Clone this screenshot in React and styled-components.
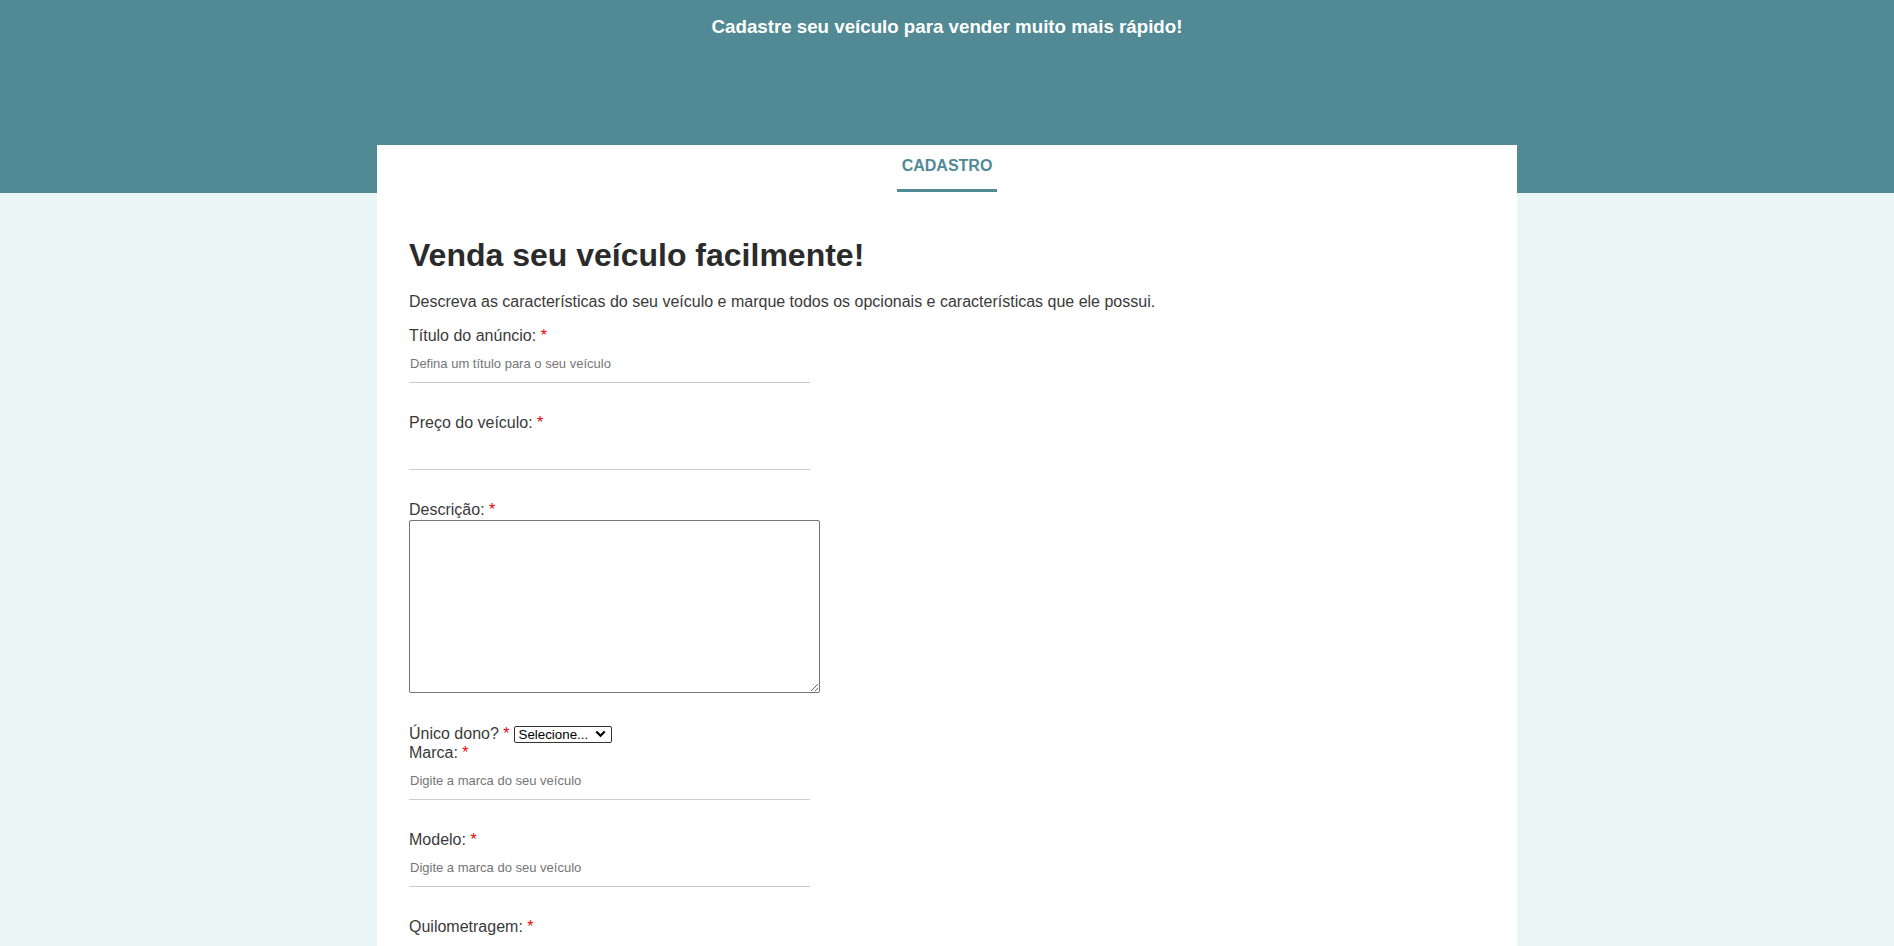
import React from 'react'
import styled, { createGlobalStyle } from 'styled-components'

const fields = [
  { name: 'titulo', label: 'Título do anúncio:', placeholder: 'Defina um título para o seu veículo' },
  { name: 'preco', label: 'Preço do veículo:', placeholder: '' }
]

const lowerFields = [
  { name: 'marca', label: 'Marca:', placeholder: 'Digite a marca do seu veículo' },
  { name: 'modelo', label: 'Modelo:', placeholder: 'Digite a marca do seu veículo' },
  { name: 'km', label: 'Quilometragem:', placeholder: '' },
  { name: 'ano', label: 'Ano:', placeholder: '' }
]

const GlobalStyle = createGlobalStyle`
  html, body {
    margin: 0;
    padding: 0;
  }
  body {
    background: #eaf6f6;
    font-family: "Liberation Sans", Arial, sans-serif;
    color: #333;
  }
`

const Header = styled.header`
  background: #518a94;
  height: 193px;
  padding-top: 16px;
  box-sizing: border-box;
  text-align: center;
`

const HeaderTitle = styled.h3`
  margin: 0;
  color: #fff;
  font-size: 18.72px;
  font-weight: 700;
  line-height: 22px;
`

const Card = styled.main`
  width: 1140px;
  margin: -48px auto 0;
  background: #fff;
  min-height: 900px;
`

const TabBar = styled.nav`
  display: flex;
  justify-content: center;
`

const Tab = styled.div`
  padding: 12px 5px 14px;
  font-size: 16px;
  line-height: 18px;
  font-weight: 700;
  color: #518a94;
  border-bottom: ${props => (props.active ? '3px solid #518a94' : '3px solid transparent')};
`

const Content = styled.section`
  padding: 24px 32px 40px;
`

const Title = styled.h1`
  margin: 21px 0 19px;
  font-size: 32px;
  line-height: 37px;
  color: #2b2b2b;
`

const Intro = styled.p`
  margin: 0 0 16px;
  font-size: 16px;
  line-height: 18px;
  color: #3a3a3a;
`

const Label = styled.label`
  display: block;
  font-size: 16px;
  line-height: 18px;
  color: #3a3a3a;
  margin-bottom: ${props => (props.inline ? '1px' : '0')};
`

const Required = styled.span`
  color: #e00;
`

const TextInput = styled.input`
  display: block;
  width: 401px;
  height: 38px;
  box-sizing: border-box;
  margin: 0 0 31px;
  padding: 0 1px;
  border: none;
  border-bottom: 1px solid #ccc;
  font-family: "Liberation Sans", Arial, sans-serif;
  font-size: 13px;
  color: #333;
  outline: none;
  ::placeholder {
    color: #777;
  }
`

const TextArea = styled.textarea`
  display: block;
  width: 411px;
  height: 173px;
  box-sizing: border-box;
  margin: 1px 0 32px;
  border: 1px solid #767676;
  border-radius: 2px;
  font-family: "Liberation Sans", Arial, sans-serif;
`

const SelectWrap = styled.span`
  position: relative;
  display: inline-block;
  margin-left: 4px;
  vertical-align: top;
  height: 18px;
`

const Select = styled.select`
  appearance: none;
  width: 98px;
  height: 17px;
  margin: 1px 0 0;
  padding: 0 0 0 4px;
  box-sizing: border-box;
  border: 1px solid #333;
  border-radius: 2px;
  background: #fff;
  font-family: "Liberation Sans", Arial, sans-serif;
  font-size: 13.33px;
  line-height: 15px;
  color: #000;
  display: block;
`

const Chevron = styled.svg`
  position: absolute;
  right: 6px;
  top: 5px;
  width: 11px;
  height: 8px;
  pointer-events: none;
`

const Field = ({ name, label, placeholder }) => (
  <>
    <Label htmlFor={name}>
      {label} <Required>*</Required>
    </Label>
    <TextInput id={name} name={name} placeholder={placeholder} />
  </>
)

export default function App () {
  return (
    <>
      <GlobalStyle />
      <Header>
        <HeaderTitle>Cadastre seu veículo para vender muito mais rápido!</HeaderTitle>
      </Header>
      <Card>
        <TabBar>
          <Tab active>CADASTRO</Tab>
        </TabBar>
        <Content>
          <Title>Venda seu veículo facilmente!</Title>
          <Intro>
            Descreva as características do seu veículo e marque todos os opcionais e características que ele possui.
          </Intro>
          <form onSubmit={e => e.preventDefault()}>
            {fields.map(f => <Field key={f.name} {...f} />)}
            <Label htmlFor="descricao">
              Descrição: <Required>*</Required>
            </Label>
            <TextArea id="descricao" name="descricao" />
            <Label htmlFor="dono" inline>
              Único dono? <Required>*</Required>
              <SelectWrap>
                <Select id="dono" name="dono" defaultValue="">
                  <option value="">Selecione...</option>
                  <option value="sim">Sim</option>
                  <option value="nao">Não</option>
                </Select>
                <Chevron viewBox="0 0 11 8">
                  <path d="M1.3 1.5 L5.5 5.7 L9.7 1.5" fill="none" stroke="#000" strokeWidth="2.2" />
                </Chevron>
              </SelectWrap>
            </Label>
            {lowerFields.map(f => <Field key={f.name} {...f} />)}
          </form>
        </Content>
      </Card>
    </>
  )
}
